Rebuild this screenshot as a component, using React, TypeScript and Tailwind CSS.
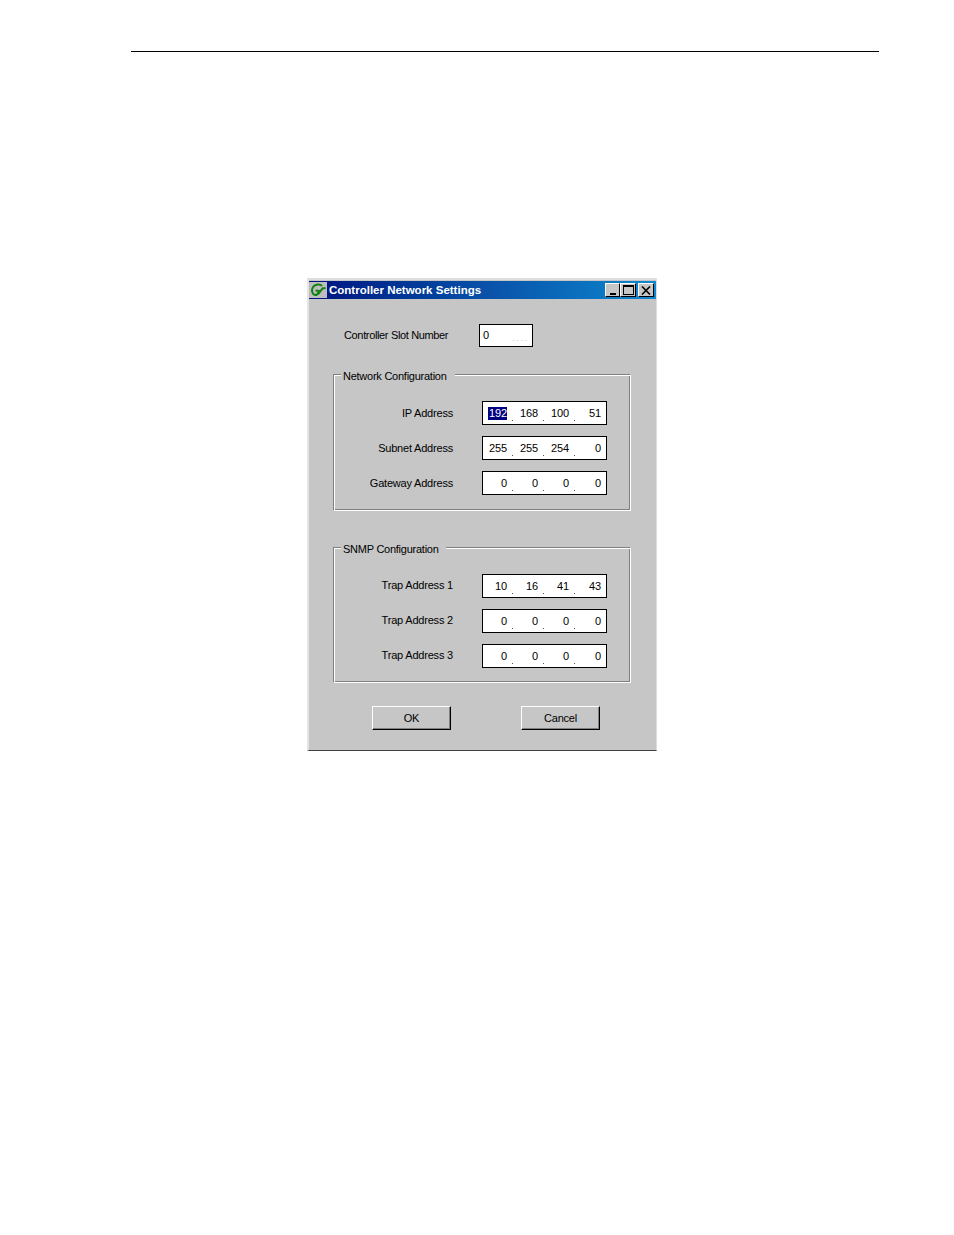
const font = { fontFamily: '"Liberation Sans", Arial, sans-serif' };

function IpField({ values, selected }: { values: string[]; selected?: boolean }) {
  return (
    <div className="flex h-[24px] w-[125px] items-center border border-black bg-white pt-px pr-[4px] text-[11px] leading-none tracking-[-0.1px] text-black">
      {values.map((v, i) => (
        <div key={i} className="relative flex h-full w-[31px] items-center justify-end pr-[7px] last:w-[26px] last:pr-[1px]">
          {selected && i === 0 ? (
            <span className="flex h-[13px] items-center bg-[#000080] pl-px text-white">{v}</span>
          ) : (
            <span>{v}</span>
          )}
          {i < 3 && <span className="absolute right-[1px] bottom-[3px] h-px w-px bg-[#555]" />}
        </div>
      ))}
    </div>
  );
}

function Row({ label, values, selected, raised }: RowData & { raised?: boolean }) {
  return (
    <div className="flex h-[24px] items-center">
      <div className={`w-[118px] text-right text-[11px] tracking-[-0.2px] text-black ${raised ? "pb-px" : "pt-px"}`}>{label}</div>
      <div className="ml-[29px]">
        <IpField values={values} selected={selected} />
      </div>
    </div>
  );
}

type RowData = { label: string; values: string[]; selected?: boolean };

function Group({ title, size, raised, rows }: { title: string; size: string; raised?: boolean; rows: RowData[] }) {
  return (
    <div className={`relative w-[298px] border border-t-[#808080] border-r-white border-b-white border-l-[#808080] pt-[26px] pl-px shadow-[inset_1px_1px_0_#fff,inset_-1px_-1px_0_#808080] ${size}`}>
      <div className={`absolute -top-[6px] left-[7px] bg-[#c6c6c6] px-[2px] text-[11px] leading-[14px] tracking-[-0.25px] whitespace-nowrap text-black ${raised ? "w-[105px]" : "w-[114px]"}`}>{title}</div>
      <div className="flex flex-col gap-[11px]">
        {rows.map((r) => (
          <Row key={r.label} {...r} raised={raised} />
        ))}
      </div>
    </div>
  );
}

function WinBtn({ width, children }: { width: string; children: React.ReactNode }) {
  return (
    <div className={`flex h-[14px] items-center justify-center border border-t-white border-r-black border-b-black border-l-white bg-[#c6c6c6] ${width}`}>
      {children}
    </div>
  );
}

function PushBtn({ children }: { children: React.ReactNode }) {
  return (
    <div className="flex h-[24px] w-[79px] items-center justify-center border border-t-white border-r-black border-b-black border-l-white bg-[#c6c6c6] text-[11px] tracking-[-0.2px] text-black shadow-[inset_-1px_-1px_0_#808080]">
      {children}
    </div>
  );
}

export default function App() {
  return (
    <div className="h-[1235px] w-[954px] overflow-hidden bg-white pt-[51px]" style={font}>
      <div className="ml-[131px] h-px w-[748px] bg-black" />

      {/* dialog */}
      <div className="mt-[226px] ml-[307px] h-[473px] w-[350px] border-t-2 border-r border-b border-l-2 border-t-[#dedede] border-r-[#dedede] border-b-[#404040] border-l-[#e4e4e4] bg-[#c6c6c6] pt-px">
        <div className="flex h-[18px] items-center bg-gradient-to-r from-[#000f80] via-[#0a50a8] to-[#1088cf] pr-[2px]">
          <div className="flex h-[16px] w-[18px] items-center justify-center bg-[#bdbdbd]">
            <svg viewBox="0 0 16 14" className="h-[14px] w-[16px]">
              <path d="M12 3 C10 0.5 5 1 3 4 C0.8 7.5 2.5 12.5 6.5 12 L9.5 8 L5.5 7.5 M8 11.5 L12.5 5.5 L15.5 5" fill="none" stroke="#108010" strokeWidth="2" />
            </svg>
          </div>
          <span className="ml-[2px] pt-px text-[11.5px] font-bold text-white">Controller Network Settings</span>
          <div className="ml-auto flex">
            <WinBtn width="w-[15px]">
              <span className="mt-[7px] h-[2px] w-[6px] bg-black" />
            </WinBtn>
            <WinBtn width="w-[16px]">
              <span className="h-[10px] w-[11px] border border-t-2 border-black" />
            </WinBtn>
            <div className="ml-[2px]">
              <WinBtn width="w-[16px]">
                <svg viewBox="0 0 10 9" className="h-[9px] w-[10px]">
                  <path d="M1 0.5 L9 8.5 M9 0.5 L1 8.5" stroke="#000" strokeWidth="1.6" fill="none" />
                </svg>
              </WinBtn>
            </div>
          </div>
        </div>

        <div className="pt-[25px] pl-[24px]">
          <div className="flex h-[23px] items-center">
            <span className="ml-[11px] w-[135px] text-[11px] tracking-[-0.35px] text-black">Controller Slot Number</span>
            <div className="relative flex h-[23px] w-[54px] items-center border border-black bg-white pl-[3px] text-[11px] leading-none text-black">
              0
              <span className="absolute right-[3px] bottom-[3px] text-[8px] leading-none tracking-[2px] text-[#b0b0b0]">....</span>
            </div>
          </div>

          <div className="mt-[27px]">
            <Group
              title="Network Configuration"
              size="h-[137px]"
              rows={[
                { label: "IP Address", values: ["192", "168", "100", "51"], selected: true },
                { label: "Subnet Address", values: ["255", "255", "254", "0"] },
                { label: "Gateway Address", values: ["0", "0", "0", "0"] },
              ]}
            />
          </div>

          <div className="mt-[36px]">
            <Group
              title="SNMP Configuration"
              size="h-[136px]"
              raised
              rows={[
                { label: "Trap Address 1", values: ["10", "16", "41", "43"] },
                { label: "Trap Address 2", values: ["0", "0", "0", "0"] },
                { label: "Trap Address 3", values: ["0", "0", "0", "0"] },
              ]}
            />
          </div>

          <div className="mt-[23px] ml-[39px] flex gap-[70px]">
            <PushBtn>OK</PushBtn>
            <PushBtn>Cancel</PushBtn>
          </div>
        </div>
      </div>
    </div>
  );
}
